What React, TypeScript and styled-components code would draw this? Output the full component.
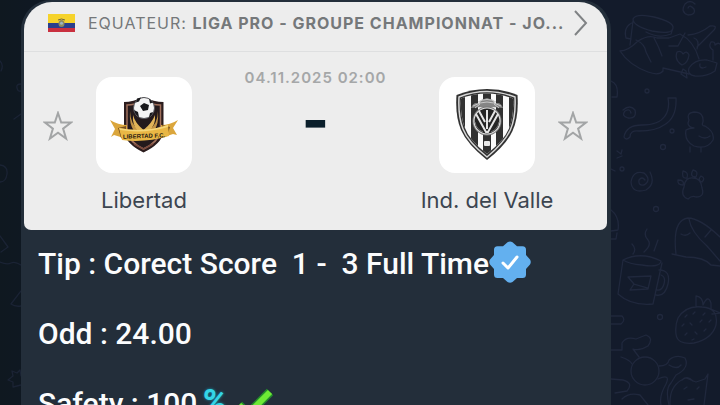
import React from "react";
import styled, { createGlobalStyle } from "styled-components";

// Types
type Team = {
  name: string,
  crest: React.ReactNode
}

type TeamBlockProps = {
  team: Team
}

// Styles
const GlobalStyle = createGlobalStyle`
  * {
    box-sizing: border-box;
  }
  body {
    margin: 0;
    background-color: #131b2b;
  }
`;

const Chat = styled.main`
  display: flex;
  height: 100vh;
  overflow: hidden;
  background: linear-gradient(90deg, #0f1820 0%, #0f1822 4%, #131b2b 84%);
`;

const Wallpaper = styled.svg<{ $width: number }>`
  flex: none;
  width: ${props => props.$width}px;
  height: 405px;
  fill: none;
  stroke: #20283d;
  stroke-width: 1.3;
  stroke-linecap: round;
  stroke-linejoin: round;
`;

const Bubble = styled.article`
  flex: 1;
  min-width: 0;
  height: fit-content;
  padding: 2px 4px 16px 3px;
  border-radius: 30px 30px 0 0;
  background-color: #232e3a;
`;

const Card = styled.section`
  overflow: hidden;
  border-radius: 28px 28px 7px 7px;
  background-color: #ededed;
  font-family: Inter, "Liberation Sans", sans-serif;
`;

const League = styled.a`
  display: flex;
  align-items: center;
  height: 50px;
  padding: 0 18px 8px 24px;
  border-bottom: 1px solid #dedfe0;
  color: #75787a;
  font-size: 16px;
  line-height: 20px;
  text-decoration: none;
`;

const Flag = styled.svg`
  flex: none;
  width: 27px;
  height: 18px;
  margin-right: 13px;
`;

const LeagueName = styled.span`
  flex: 1;
  min-width: 0;
  overflow: hidden;
  white-space: nowrap;
  text-overflow: ellipsis;
  letter-spacing: 1px;
`;

const Chevron = styled.svg`
  flex: none;
  width: 16px;
  height: 26px;
  fill: none;
  stroke: #808385;
  stroke-width: 2;
`;

const Match = styled.div`
  display: grid;
  grid-template-columns: 30px 136px 1fr 136px 30px;
  column-gap: 3px;
  padding: 16px 19px;
`;

const StarButton = styled.button`
  width: 30px;
  height: 30px;
  margin-top: 43px;
  padding: 0;
  border: 0;
  background: none;
  svg {
    display: block;
    fill: none;
    stroke: #a3a5a6;
    stroke-width: 2;
  }
`;

const TeamColumn = styled.div`
  display: flex;
  flex-direction: column;
  align-items: center;
  gap: 13px;
  padding-top: 9px;
`;

const Tile = styled.div`
  width: 96px;
  height: 96px;
  border-radius: 16px;
  background-color: #fff;
`;

const TeamName = styled.span`
  color: #3c4550;
  font-size: 22px;
  line-height: 28px;
  white-space: nowrap;
`;

const Middle = styled.div`
  display: flex;
  flex-direction: column;
  align-items: center;
`;

const Kickoff = styled.time`
  color: #a5a7a8;
  font-size: 15px;
  font-weight: 600;
  line-height: 20px;
  letter-spacing: 1px;
  white-space: nowrap;
`;

const Score = styled.span`
  margin-top: 4px;
  color: #0b1f2b;
  font-size: 58px;
  font-weight: 800;
  line-height: 56px;
`;

const Message = styled.div`
  padding: 16px 14px 0;
  color: #fbfcfd;
  font-family: Roboto, "Liberation Sans", sans-serif;
  font-size: 30px;
  font-weight: 500;
  line-height: 35px;
`;

const Line = styled.p`
  display: flex;
  align-items: center;
  height: 35px;
  margin: 0 0 35px;
  white-space: pre;
`;

const Badge = styled.svg`
  flex: none;
  width: 42px;
  height: 42px;
  margin-bottom: 4px;
`;

const Percent = styled.span`
  margin-left: 4px;
  color: #35d6e6;
  font-size: 36px;
  font-weight: 700;
  font-style: italic;
  text-shadow: 0 0 3px #1596b4;
`;

const Tick = styled.svg`
  flex: none;
  width: 42px;
  height: 38px;
  margin-left: 6px;
`;

const EcuadorFlag = () => (
  <Flag viewBox="0 0 27 18">
    <rect width="27" height="9" fill="#f6d32b" />
    <rect y="9" width="27" height="5" fill="#2a3f8c" />
    <rect y="14" width="27" height="4" fill="#c9303f" />
    <ellipse cx="13.5" cy="9.5" rx="3" ry="3.6" fill="#8d8a62" />
    <path d="M10 6q3.5-2 7 0" fill="none" stroke="#6b6444" />
    <circle cx="13.5" cy="9.3" r="1.5" fill="#9fb7bd" />
  </Flag>
);

const Star = ({ label }: { label: string }) => (
  <StarButton type="button" aria-label={label}>
    <svg width="30" height="30" viewBox="0 0 30 30">
      <path d="M15 2l3.2 9.6H28l-7.9 6 3 10L15 21.8l-8.1 5.8 3-10L2 11.600h9.800z" />
    </svg>
  </StarButton>
);

const LibertadCrest = () => (
  <svg width="96" height="96" viewBox="0 0 96 96">
    <path d="M28 25q9 0 19.500-5 10.500 5 20 5v30q-2 12-20 20.500Q30 67 28 55z" fill="#2b1c1d" />
    <path d="M31 28q8 0 16.500-4 8.500 4 17 4v26q-2 11-17 18Q33 65 31 54z" fill="#241a1c" stroke="#a0705c" strokeWidth="1.500" />
    <path d="M34 34q0 13 10 20h-6q-5-7-4-20zM62 34q0 13-10 20h6q5-7 4-20z" fill="#c39446" />
    <path d="M37 38q2 8 10.500 15Q56 46 59 38q1 10-6 16H42q-6-6-5-16z" fill="#e0b458" />
    <circle cx="48" cy="31" r="10.500" fill="#f4f4f4" stroke="#55555a" />
    <path d="M44 29l4-3 5 2-1 5-5 1zM41 21.500l4-1-2 4-3 1zM53 21.500l4 4-3 1zM38 33l4 2 1 5q-4-2-5-7zM54 36l3-1q-1 4-4 5z" fill="#19191c" />
    <path d="M14 43q8 5 17 5v14l-13-4-3 2 4-8zM82 43q-8 5-17 5v13l12-4 4 1-4-7z" fill="#dba63c" />
    <path d="M22 51l8-2v14l-5-2zM74 50l-8-2v13l5-2z" fill="#765022" />
    <path d="M23 51q25 5 49-3l1 11q-24 7-47 4z" fill="#e9b745" />
    <path d="M23 51q25 5 49-3v2q-24 7-48 3z" fill="#f6d779" />
    <text x="48" y="61" textAnchor="middle" fill="#291b12" fontFamily="Liberation Sans, sans-serif" fontSize="6" fontWeight="700" transform="rotate(-2 48 58)">LIBERTAD F.C.</text>
    <path d="M38 67l9.500 5 9.500-5" fill="none" stroke="#7a4a3d" strokeWidth="1.500" />
  </svg>
);

const ValleCrest = () => (
  <svg width="96" height="96" viewBox="0 0 96 96">
    <defs>
      <clipPath id="valle-shield">
        <path d="M22 21.500q13-5 26-5t26 5q1 18-4 30T48 77Q30 63 25.500 50T22 21.500z" />
      </clipPath>
    </defs>
    <path d="M17.500 18Q32 12 48 12t30.500 6q1.500 22-5 36T48 83Q28 67 22 53t-4.500-35z" fill="#323232" />
    <path d="M20 20q14-5.500 28-5.500T76 20q1 20-4.500 32.500T48 80Q29 65 24 52t-4-32z" fill="none" stroke="#d6d6d6" strokeWidth="1.500" />
    <g clipPath="url(#valle-shield)">
      <rect x="18" y="12" width="60" height="70" fill="#fafafa" />
      <path d="M22 12h4v70h-4zM32 12h7v70h-7zM44 12h8v70h-8zM57 12h7v70h-7zM70 12h4v70h-4z" fill="#303030" />
    </g>
    <path d="M32 31q3-7 8-4l2-4 6-2 6 2 2 4q5-3 8 4-7-1-16-1t-16 1z" fill="#858585" />
    <path d="M34 29q14-8 28 0M39 25q9-5 18 0M36 31l5-4M60 31l-5-4" fill="none" stroke="#c8c8c8" />
    <circle cx="48" cy="44" r="14.500" fill="#777" />
    <circle cx="48" cy="44" r="13" fill="#242424" stroke="#ddd" strokeWidth="1.200" />
    <path d="M37 37l10 18h2l10-18M48 33v19M40 34l6 11M56 34l-6 11" fill="none" stroke="#e5e5e5" strokeWidth="2" />
    <path d="M36 45q1 7 8 10M60 45q-1 7-8 10" fill="none" stroke="#777" />
    <rect x="45" y="64" width="6" height="5" rx="1" fill="#e8e8e8" />
  </svg>
);

const VerifiedBadge = () => (
  <Badge viewBox="0 0 42 42" role="img" aria-label="Verified">
    <path d="M18.500 1.200q2.500-1.500 5 0l4.500 4h5.500q3.500 0 3.500 3.500V14l4 4.500q1.500 2.500 0 5L37 28v5.500q0 3.500-3.500 3.500H28l-4.500 4q-2.500 1.500-5 0L14 37H8.500Q5 37 5 33.500V28l-4-4.500q-1.500-2.500 0-5L5 14V8.700q0-3.500 3.500-3.500H14z" fill="#63b0ef" />
    <path d="M14 22l5 5 9-11" fill="none" stroke="#fff" strokeWidth="3" strokeLinecap="round" strokeLinejoin="round" />
  </Badge>
);

const GreenTick = () => (
  <Tick viewBox="0 0 42 38" role="img" aria-label="Checked">
    <path d="M6 20l9 9L37 7" fill="none" stroke="#238a2c" strokeWidth="9" strokeLinejoin="round" />
    <path d="M6 20l9 9L37 7" fill="none" stroke="#6eea35" strokeWidth="6" />
  </Tick>
);

const LeftDoodles = () => (
  <Wallpaper $width={21} viewBox="0 0 21 405" aria-hidden="true" opacity="0.7">
    <path d="M0 61q4 4 1 10M21 84q-5 0-4 4t4 3M14 119l7-5M0 165q8 1 7 9t-7 8M0 236l8 11-7 5M0 262q7 3 11 1t10 2M21 291l-10 13q4 3 10 2M12 371l5 2 3-3 1 6M12 371l1 5-5 4 5 2v5l8-2" />
  </Wallpaper>
);

const RightDoodles = () => (
  <Wallpaper $width={109} viewBox="0 0 109 405" aria-hidden="true">
    {/* spirals */}
    <path d="M84 4q-5-5-10 0-5 8 3 11 8 0 6-6-4-5-6-1M12 110q7-6 12 0 2 9-7 8-7-2-3-7 5-3 6 2M39 172q6 12-4 18-14 4-15-8 2-12 13-9 8 7 0 12-6 1-5-5 3-4 6 0" />
    {/* upside-down cat with a drum */}
    <path d="M22 19q3-6 21-2 20 5 19 11-1 7-21 3-19-5-19-12zM22 21l-3 24M62 28l-2 6q-12 5-25-2M23 22q-11 4-8 16l5 1M9 51q8 0 18-10 11-7 19-3l12 0 11-4q14 7 19 25M9 51q9 14 28 21 11 4 15-1v-3l26 6M25 40q9 4 10 12l5 10M43 38q5 9 8 18M58 46h9l7-13M77 35q12-1 22-9 8-1 4 4L86 47M83 38q6 2 3 11" />
    <path d="M78 68q6-9 18-8l10 3-2 8q-9 6-20 5-8-1-6-8zM71 65q-8-5-5-13 4-2 6 2 4-4 6 1-1 8-7 10zM75 71l-3-2-2 5 6 4zM89 64q-1 4 3 4l3-1M102 60V50q-5-3-2-8 4-1 4 3 3-3 5-1" />
    {/* ribbon, duck */}
    <path d="M0 81q8 3 6 16H1M57 98h8q1 20-12 27-8 6-25 6-9-1-9 6-4 4-6 0 2-12 18-12 17 0 23-9 5-7 3-18zM78 120q-3-7 5-8 10 0 9 10-2 4 2 4 10 6 8 14-6 10-19 6-10-5-8-16 3-2 8-2-6-1-6-5zM79 147v5M90 147v5M88 136q6 4 11 0" />
    {/* paw */}
    <path d="M73 187q1-10 9-9 8 0 9 10 3 9-6 9-4-2-8 2-8-3-4-12zM72 171q6 1 4 7-6 1-4-7zM82 170q6 1 3 7-7 0-3-7zM90 176q5 2 1 6-5-2-1-6zM67 180q7 0 5 5-6 0-5-5z" />
    {/* small marks */}
    <path d="M6 151l4 3 1-4M6 158l5-2M0 169l4 2M0 210q9 7 7 20l-7 1M0 239h5l1-6" />
    <circle cx="36" cy="91" r="2" /><circle cx="52" cy="147" r="2.500" /><circle cx="11" cy="169" r="2" />
    <circle cx="45" cy="209" r="2.500" /><circle cx="49" cy="317" r="2.500" /><circle cx="61" cy="131" r="2" />
    {/* sleeping whale */}
    <path d="M65 254q-4-34 12-36 12 0 32 19M78 219q2 13 18 27l13 15M61 254l14 3q18 0 25 8l9 1M70 234q5 3 9-1M94 237l6-7" />
    {/* mug */}
    <path d="M12 260q18-9 38 1-1 7-19 4-13-1-19-5L7 294q13 12 35 10l9-41M48 270q12 0 9 14-3 13-12 11M50 275q5 2 3 9-2 7-7 6M17 277l23-1-3 13-18 1 4-6zM23 284l14 4M36 229q-4 6 1 11 4 5-4 12M21 244q5 5 1 10M47 240l-4 11" />
    {/* strawberry */}
    <path d="M67 318q8-13 24-11 17 1 14 18-4 14-22 18-17 2-18-9-1-9 2-16zM85 307v-11q7 1 7 9 5-11 8-2v6l9 4-8 1" />
    <path d="M74 317l2-2M82 314l2-2M92 315l2-2M71 326l2-2M79 323l2 2M89 322l2-2M98 322l2-2M74 335l2-2M84 332l2 2M93 331l2-2M81 340l2-1" />
    {/* creature with a long tail */}
    <path d="M0 316h11q4 4-1 8H0M0 350h11v-7q4-7 14-4l10-4q8 3 2 11-8 5-15 3l6 8M10 357q9 3 11 7" />
    <circle cx="34" cy="371" r="14" />
    <path d="M48 366q9 0 10-6 7-6 16-2 5 10-9 17l-5 8q-6 6-2 22M58 365q8 5 12 0M0 379l12 1q11 3 4 11l-12 2M11 399q7-7 18-4l8 10M47 379q13-6 8 5-7 12-5 21" />
    {/* cat */}
    <path d="M59 405q-1-21 16-27l10 4 9-3 3-5-4 31M71 380q5-5 11 1M73 389l3-2M86 389l2-2M77 400l6-1" />
  </Wallpaper>
);

const TeamBlock = (props: TeamBlockProps) => (
  <TeamColumn>
    <Tile>{props.team.crest}</Tile>
    <TeamName>{props.team.name}</TeamName>
  </TeamColumn>
);

const home: Team = { name: "Libertad", crest: <LibertadCrest /> };
const away: Team = { name: "Ind. del Valle", crest: <ValleCrest /> };

const App = () => {
  return (
    <>
      <GlobalStyle />
      <Chat>
        <LeftDoodles />
        <Bubble>
          <Card>
            <League href="#league">
              <EcuadorFlag />
              <LeagueName>EQUATEUR: <b>LIGA PRO - GROUPE CHAMPIONNAT - JO...</b></LeagueName>
              <Chevron viewBox="0 0 16 26">
                <path d="M2 1l11 12L2 25" />
              </Chevron>
            </League>
            <Match>
              <Star label="Follow Libertad" />
              <TeamBlock team={home} />
              <Middle>
                <Kickoff dateTime="2025-11-04T02:00">04.11.2025 02:00</Kickoff>
                <Score>-</Score>
              </Middle>
              <TeamBlock team={away} />
              <Star label="Follow Ind. del Valle" />
            </Match>
          </Card>
          <Message>
            <Line>{"Tip : Corect Score  1 -  3 Full Time"}<VerifiedBadge /></Line>
            <Line>Odd : 24.00</Line>
            <Line>Safety : 100<Percent>%</Percent><GreenTick /></Line>
          </Message>
        </Bubble>
        <RightDoodles />
      </Chat>
    </>
  );
}

export default App;
